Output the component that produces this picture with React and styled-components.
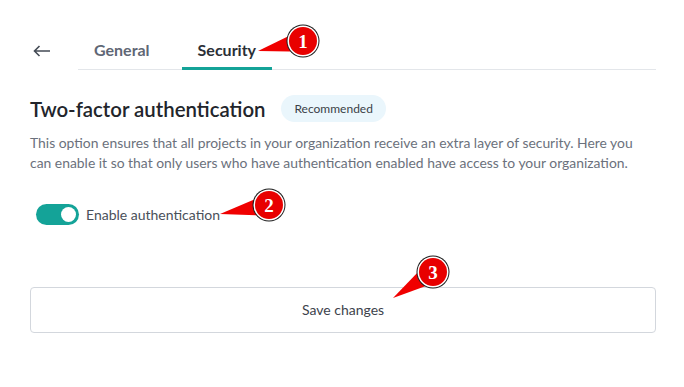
import styled, { createGlobalStyle } from "styled-components";

const GlobalStyle = createGlobalStyle`
    body {
        margin: 0;
        background: #ffffff;
        font-family: Lato, "Noto Sans", sans-serif;
    }
`;

const callouts = [
    { n: 1, cx: 303, cy: 41, tx: 258, ty: 51 },
    { n: 2, cx: 269, cy: 205, tx: 220, ty: 214 },
    { n: 3, cx: 433, cy: 272, tx: 393, ty: 298 },
];

function Callout({ n, cx, cy, tx, ty }) {
    const dx = cx - tx;
    const dy = cy - ty;
    const len = Math.hypot(dx, dy);
    const px = (-dy / len) * 11;
    const py = (dx / len) * 11;
    const pts = `${tx},${ty} ${cx + px},${cy + py} ${cx - px},${cy - py}`;
    return (
        <g>
            <polygon points={pts} fill="#f00000" />
            <circle cx={cx} cy={cy} r="16.5" fill="#1a1a1a" />
            <circle cx={cx} cy={cy} r="15.5" fill="#ffffff" />
            <circle cx={cx} cy={cy} r="14" fill="#e80000" />
            <text
                x={cx}
                y={cy + 6.5}
                textAnchor="middle"
                fontFamily="'Liberation Serif', serif"
                fontWeight="700"
                fontSize="19"
                fill="#ffffff"
            >
                {n}
            </text>
        </g>
    );
}

function App() {
    return (
        <Page>
            <GlobalStyle />
            <Header>
                <BackButton aria-label="Back">
                    <svg width="18" height="12" viewBox="0 0 18 12">
                        <path
                            d="M17 6H1.5M6.5 1L1.5 6l5 5"
                            stroke="#444b55"
                            strokeWidth="1.6"
                            fill="none"
                        />
                    </svg>
                </BackButton>
                <Tabs>
                    <Tab>General</Tab>
                    <Tab active>Security</Tab>
                </Tabs>
            </Header>

            <TitleRow>
                <Title>Two-factor authentication</Title>
                <Badge>Recommended</Badge>
            </TitleRow>
            <Desc>
                This option ensures that all projects in your organization
                receive an extra layer of security. Here you can enable it so
                that only users who have authentication enabled have access to
                your organization.
            </Desc>

            <ToggleRow>
                <Toggle on />
                <ToggleLabel>Enable authentication</ToggleLabel>
            </ToggleRow>

            <SaveButton>Save changes</SaveButton>

            <Overlay width="684" height="387" viewBox="0 0 684 387">
                {callouts.map((c) => (
                    <Callout key={c.n} {...c} />
                ))}
            </Overlay>
        </Page>
    );
}

export default App;

const Page = styled.div`
    position: relative;
    width: 684px;
    height: 387px;
    box-sizing: border-box;
    padding: 31px 28px 0 30px;
`;

const Header = styled.div`
    display: flex;
    align-items: stretch;
`;

const BackButton = styled.div`
    width: 48px;
    display: flex;
    align-items: center;
    padding-left: 3px;
    box-sizing: border-box;
    height: 39px;
`;

const Tabs = styled.div`
    flex: 1;
    display: flex;
    gap: 16px;
    border-bottom: 1px solid #e3e6ea;
`;

const Tab = styled.div.withConfig({
    shouldForwardProp: (prop) => prop !== "active",
})`
    height: 39px;
    box-sizing: border-box;
    padding: 1px 16px 0;
    display: flex;
    align-items: center;
    font-size: 16px;
    font-weight: 700;
    color: ${({ active }) => (active ? "#2b2f36" : "#5f6775")};
    border-bottom: 3px solid
        ${({ active }) => (active ? "#14a398" : "transparent")};
    margin-bottom: -1px;
`;

const TitleRow = styled.div`
    display: flex;
    align-items: center;
    gap: 16px;
    margin-top: 25px;
    height: 27px;
`;

const Title = styled.h2`
    margin: 0;
    font-size: 20.4px;
    font-weight: 600;
    color: #22252b;
`;

const Badge = styled.span`
    display: inline-flex;
    align-items: center;
    height: 27px;
    padding: 0 13px;
    border-radius: 14px;
    background: #eaf6fc;
    font-size: 12px;
    color: #3a3f47;
`;

const Desc = styled.p`
    margin: 11px 0 0;
    font-size: 13.9px;
    line-height: 20px;
    color: #6b717c;
    max-width: 610px;
`;

const ToggleRow = styled.div`
    display: flex;
    align-items: center;
    gap: 7px;
    margin-top: 31px;
    padding-left: 6px;
`;

const Toggle = styled.span.withConfig({
    shouldForwardProp: (prop) => prop !== "on",
})`
    position: relative;
    width: 43px;
    height: 21px;
    border-radius: 11px;
    background: ${({ on }) => (on ? "#14a398" : "#cfd4da")};

    &::after {
        content: "";
        position: absolute;
        top: 3px;
        left: ${({ on }) => (on ? "25px" : "3px")};
        width: 15px;
        height: 15px;
        border-radius: 50%;
        background: #ffffff;
    }
`;

const ToggleLabel = styled.span`
    font-size: 14px;
    color: #4a505a;
`;

const SaveButton = styled.button`
    display: block;
    width: 626px;
    height: 46px;
    margin-top: 62px;
    padding-bottom: 2px;
    border: 1px solid #d3d7dd;
    border-radius: 4px;
    background: #ffffff;
    font-family: Lato, "Noto Sans", sans-serif;
    font-size: 14px;
    color: #3d434c;
`;

const Overlay = styled.svg`
    position: absolute;
    left: 0;
    top: 0;
    pointer-events: none;
`;
